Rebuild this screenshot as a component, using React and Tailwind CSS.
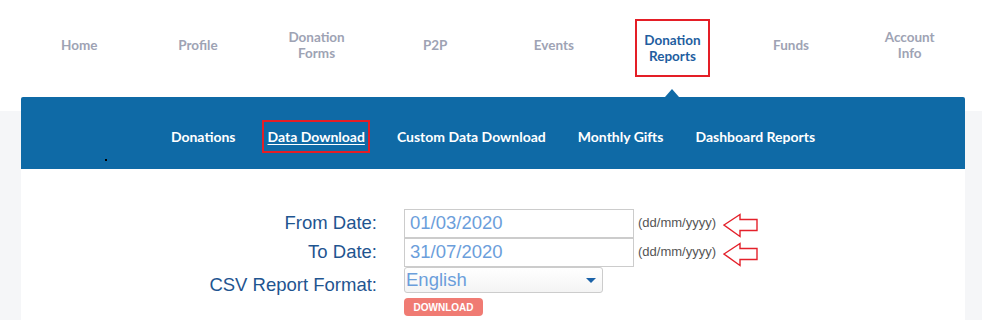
import React from 'react';

const navItems = [
  ['Home'],
  ['Profile'],
  ['Donation', 'Forms'],
  ['P2P'],
  ['Events'],
  ['Donation', 'Reports'],
  ['Funds'],
  ['Account', 'Info'],
];

const subItems = ['Donations', 'Data Download', 'Custom Data Download', 'Monthly Gifts', 'Dashboard Reports'];

const Arrow = () => (
  <svg width="36" height="25" viewBox="0 0 36 25" className="ml-[7px] mt-[4px]">
    <polygon
      points="1,12 17,1.5 17,6.5 34,6.5 34,17.5 17,17.5 17,23.5"
      fill="none"
      stroke="#e4212b"
      strokeWidth="1.4"
    />
  </svg>
);

const DateRow = ({ label, value, className = '' }) => (
  <div className={`flex items-center h-[28px] ${className}`}>
    <div className="w-[356px] text-right text-[18.5px] text-[#1f5590] font-['Liberation_Sans',Arial,sans-serif]">{label}</div>
    <div className="ml-[27px] w-[230px] h-[29px] border border-[#cccccc] px-[5px] flex items-center text-[18.5px] text-[#6b9edb] font-['Liberation_Sans',Arial,sans-serif]">
      {value}
    </div>
    <span className="ml-[4px] text-[13px] text-[#555555] font-['Liberation_Sans',Arial,sans-serif]">(dd/mm/yyyy)</span>
    <Arrow />
  </div>
);

export default function App() {
  return (
    <div className="w-[982px] h-[320px] overflow-hidden bg-white font-['Lato',sans-serif]">
      <nav className="ml-[20px] w-[949px] h-[97px] grid grid-cols-8">
        {navItems.map((lines, i) => {
          const active = i === 5;
          return (
            <div key={i} className="relative flex items-center justify-center pb-[7px]">
              {active ? (
                <div className="mt-[6px] border-2 border-[#e41e26] px-[7px] py-[11px] text-center text-[13.5px] leading-[16px] font-bold text-[#1f5ea0]">
                  {lines.map((l) => (
                    <div key={l}>{l}</div>
                  ))}
                </div>
              ) : (
                <div className="text-center text-[13.5px] leading-[16px] font-bold text-[#9ea3b4]">
                  {lines.map((l) => (
                    <div key={l}>{l}</div>
                  ))}
                </div>
              )}
              {active && (
                <span className="absolute bottom-0 left-1/2 -translate-x-1/2 w-0 h-0 border-l-[7px] border-r-[7px] border-b-[8px] border-l-transparent border-r-transparent border-b-[#0f6aa6]" />
              )}
            </div>
          );
        })}
      </nav>

      <div className="pl-[21px] pr-[17px] h-[223px] bg-[linear-gradient(to_bottom,#ffffff_14px,#f5f6f8_14px)]">
        <div className="relative h-[72px] bg-[#0f6aa6] rounded-t-[2px] flex items-center justify-center gap-8 pt-[6px]">
          {subItems.map((s) =>
            s === 'Data Download' ? (
              <span key={s} className="-mx-[5px] border-2 border-[#e41e26] px-[3px] py-[6px] text-[14px] leading-[17px] font-bold text-white underline underline-offset-2">
                {s}
              </span>
            ) : (
              <span key={s} className="text-[14px] leading-[17px] font-bold text-white">
                {s}
              </span>
            )
          )}
          <span className="absolute left-[84px] top-[62px] w-[2px] h-[2px] bg-black" />
        </div>

        <div className="bg-white h-[151px] pt-[40px]">
          <DateRow label="From Date:" value="01/03/2020" />
          <DateRow label="To Date:" value="31/07/2020" className="mt-[1px]" />
          <div className="flex items-start h-[26px] mt-[1px]">
            <div className="w-[356px] text-right text-[18.5px] leading-[22px] text-[#1f5590] font-['Liberation_Sans',Arial,sans-serif] pt-[7px]">
              CSV Report Format:
            </div>
            <div className="ml-[27px] w-[199px] h-[26px] border border-[#cccccc] rounded-[3px] bg-[linear-gradient(to_bottom,#ffffff,#f4f4f4)] flex items-center justify-between pl-[1px] pr-[6px] text-[18.5px] text-[#6b9edb] font-['Liberation_Sans',Arial,sans-serif]">
              <span>English</span>
              <span className="w-0 h-0 border-l-[5px] border-r-[5px] border-t-[5px] border-l-transparent border-r-transparent border-t-[#1b62a8]" />
            </div>
          </div>
          <div className="ml-[383px] mt-[5px] w-[79px] h-[18px] rounded-[4px] bg-[#f07b73] flex items-center justify-center text-[10px] font-bold text-white font-['Liberation_Sans',Arial,sans-serif]">
            DOWNLOAD
          </div>
        </div>
      </div>
    </div>
  );
}
